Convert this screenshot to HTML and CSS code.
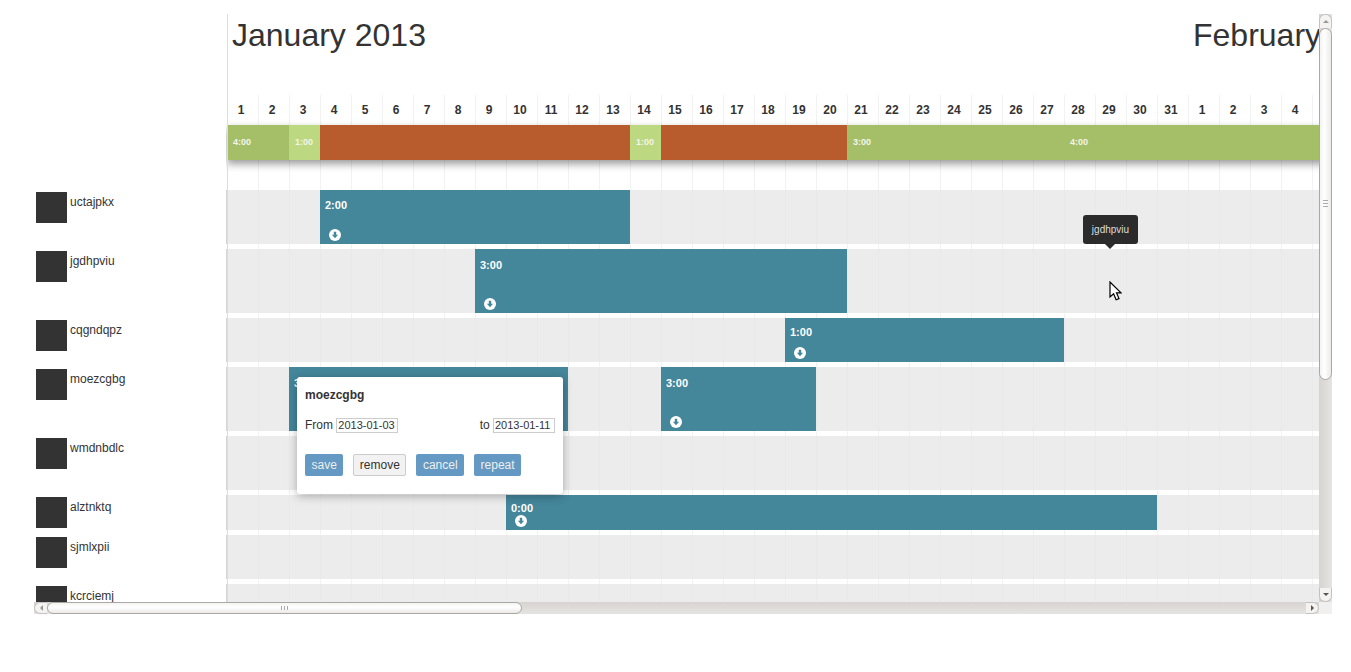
FILE: index.html
```html
<!DOCTYPE html>
<html>
<head>
  <title>Gantt</title>
  <meta name="viewport" content="width=device-width, initial-scale=1">
  <link rel="stylesheet" href="styles.css">
</head>
<body>

  <div class="app">
    <div class="view">
      <div class="names">
        <div class="name h54"><span class="avatar"></span>uctajpkx</div>
        <div class="name h64"><span class="avatar"></span>jgdhpviu</div>
        <div class="name h44"><span class="avatar"></span>cqgndqpz</div>
        <div class="name h64"><span class="avatar"></span>moezcgbg</div>
        <div class="name h54"><span class="avatar"></span>wmdnbdlc</div>
        <div class="name h35"><span class="avatar"></span>alztnktq</div>
        <div class="name h44"><span class="avatar"></span>sjmlxpii</div>
        <div class="name h54"><span class="avatar"></span>kcrciemj</div>
      </div>

      <div class="timeline">
        <div class="months">
          <div class="month">January 2013</div>
          <div class="month">February 2013</div>
        </div>

        <div class="grid">
          <div class="days">
            <span>1</span><span>2</span><span>3</span><span>4</span><span>5</span><span>6</span><span>7</span><span>8</span><span>9</span><span>10</span>
            <span>11</span><span>12</span><span>13</span><span>14</span><span>15</span><span>16</span><span>17</span><span>18</span><span>19</span><span>20</span>
            <span>21</span><span>22</span><span>23</span><span>24</span><span>25</span><span>26</span><span>27</span><span>28</span><span>29</span><span>30</span><span>31</span>
            <span>1</span><span>2</span><span>3</span><span>4</span>
          </div>

          <div class="summary">
            <div class="seg ok" style="grid-column: 1 / 3">4:00</div>
            <div class="seg light" style="grid-column: 3 / 4">1:00</div>
            <div class="seg over" style="grid-column: 4 / 14"></div>
            <div class="seg light" style="grid-column: 14 / 15">1:00</div>
            <div class="seg over" style="grid-column: 15 / 21"></div>
            <div class="seg ok" style="grid-column: 21 / 28">3:00</div>
            <div class="seg ok" style="grid-column: 28 / 37">4:00</div>
          </div>

          <div class="rows">
            <div class="row h54">
              <div class="bar" style="grid-column: 4 / 14">
                <b>2:00</b>
                <svg class="dl" viewBox="0 0 12 12"><circle cx="6" cy="6" r="6" fill="#fff"/><path d="M4.8 2.8h2.4v3h1.9L6 9.2 2.9 5.8h1.9z" fill="#44869a"/></svg>
              </div>
            </div>
            <div class="row h64">
              <div class="bar" style="grid-column: 9 / 21">
                <b>3:00</b>
                <svg class="dl" viewBox="0 0 12 12"><circle cx="6" cy="6" r="6" fill="#fff"/><path d="M4.8 2.8h2.4v3h1.9L6 9.2 2.9 5.8h1.9z" fill="#44869a"/></svg>
              </div>
            </div>
            <div class="row h44">
              <div class="bar" style="grid-column: 19 / 28">
                <b>1:00</b>
                <svg class="dl" viewBox="0 0 12 12"><circle cx="6" cy="6" r="6" fill="#fff"/><path d="M4.8 2.8h2.4v3h1.9L6 9.2 2.9 5.8h1.9z" fill="#44869a"/></svg>
              </div>
            </div>
            <div class="row h64">
              <div class="bar" style="grid-column: 3 / 12">
                <b>3:00</b>
              </div>
              <div class="bar" style="grid-column: 15 / 20">
                <b>3:00</b>
                <svg class="dl" viewBox="0 0 12 12"><circle cx="6" cy="6" r="6" fill="#fff"/><path d="M4.8 2.8h2.4v3h1.9L6 9.2 2.9 5.8h1.9z" fill="#44869a"/></svg>
              </div>
            </div>
            <div class="row h54"></div>
            <div class="row h35">
              <div class="bar" style="grid-column: 10 / 31">
                <b>0:00</b>
                <svg class="dl" viewBox="0 0 12 12"><circle cx="6" cy="6" r="6" fill="#fff"/><path d="M4.8 2.8h2.4v3h1.9L6 9.2 2.9 5.8h1.9z" fill="#44869a"/></svg>
              </div>
            </div>
            <div class="row h44"></div>
            <div class="row h54"></div>
          </div>
        </div>
      </div>

      <div class="popover">
        <div class="pop-title">moezcgbg</div>
        <div class="pop-dates">
          <label>From <input type="text" value="2013-01-03"></label>
          <label>to <input type="text" value="2013-01-11"></label>
        </div>
        <div class="pop-buttons">
          <button class="btn save">save</button>
          <button class="btn plain">remove</button>
          <button class="btn">cancel</button>
          <button class="btn">repeat</button>
        </div>
      </div>

      <div class="tooltip">jgdhpviu</div>

      <svg class="cursor" viewBox="0 0 13 20"><path d="M1 1v15l3.6-3.2 2.5 6 2.9-1.2-2.5-5.8H12z" fill="#fff" stroke="#000" stroke-width="1.2"/></svg>
    </div>

    <div class="vbar">
      <div class="arrow-btn top"><i class="tri up"></i></div>
      <div class="vthumb"><span class="grip-v"></span></div>
      <div class="vfill"></div>
      <div class="arrow-btn bottom"><i class="tri down"></i></div>
    </div>

    <div class="hbar">
      <div class="arrow-btn left"><i class="tri back"></i></div>
      <div class="hthumb"><span class="grip-h"></span></div>
      <div class="hfill"></div>
      <div class="arrow-btn right"><i class="tri next"></i></div>
    </div>
    <div class="corner"></div>
  </div>

</body>
</html>
```

FILE: styles.css
```css
body {
  margin: 0;
  background: #fff;
  color: #333;
  font-family: "Liberation Sans", Arial, sans-serif;
  font-size: 12px;
}

.app {
  display: grid;
  grid-template-columns: 1285px 13px;
  grid-template-rows: 588px 12px;
  width: 1298px;
  margin: 14px 0 0 34px;
}

.view {
  position: relative;
  display: flex;
  overflow: hidden;
}

/* names column */
.names {
  flex: none;
  width: 193px;
  padding-top: 176px;
  box-sizing: border-box;
}
.name {
  display: flex;
  box-sizing: border-box;
  margin-bottom: 5px;
  padding: 2px 0 0 2px;
  line-height: 21px;
  white-space: nowrap;
}
.avatar {
  flex: none;
  width: 31px;
  height: 31px;
  margin-right: 3px;
  background: #333;
}

.h35 { height: 35px; }
.h44 { height: 44px; }
.h54 { height: 54px; }
.h64 { height: 64px; }

/* timeline */
.timeline {
  position: relative;
  flex: none;
  width: 1116px;
  clip-path: inset(0 0 0 -1px);
}
.timeline::after {
  content: "";
  position: absolute;
  left: 0;
  top: 0;
  bottom: 0;
  width: 1px;
  background: #ddd;
}
.months {
  display: flex;
  height: 81px;
}
.month {
  flex: none;
  width: 961px;
  padding: 2px 0 0 5px;
  box-sizing: border-box;
  font-size: 32px;
  line-height: 38px;
  white-space: nowrap;
}
.grid {
  background-image: linear-gradient(to right, #f2f2f2 1px, transparent 1px);
  background-size: 31px 100%;
}
.days {
  display: grid;
  grid-template-columns: repeat(36, 31px);
  height: 30px;
}
.days span {
  padding: 8px 3px 0 0;
  text-align: center;
  font-weight: bold;
  line-height: 14px;
}
.summary {
  display: grid;
  grid-template-columns: repeat(36, 31px);
  height: 35px;
  box-shadow: 0 4px 8px rgba(0, 0, 0, .4);
  margin-bottom: 30px;
}
.seg {
  padding-left: 6px;
  color: #f4f4e8;
  font-size: 9px;
  font-weight: bold;
  line-height: 35px;
}
.ok { background: #a5bf69; }
.light { background: #bcd881; }
.over { background: #b85c2e; }

.row {
  display: grid;
  grid-template-columns: repeat(36, 31px);
  margin-bottom: 5px;
  background-color: #ececec;
  background-image: linear-gradient(to right, #e9e9e9 1px, transparent 1px);
  background-size: 31px 100%;
  box-shadow: -1px 0 0 #d4d4d4;
}
.row .bar {
  grid-row: 1;
}
.bar {
  display: flex;
  flex-direction: column;
  justify-content: space-between;
  align-items: flex-start;
  box-sizing: border-box;
  padding: 8px 0 3px 5px;
  background: #44869a;
  color: #fff;
  font-size: 11px;
  line-height: 14px;
}
.h64 .bar { padding-top: 9px; }
.h44 .bar { padding-top: 7px; }
.h35 .bar { padding-top: 6px; }
.dl {
  flex: none;
  width: 12px;
  height: 12px;
  margin-left: 4px;
}

/* popover */
.popover {
  position: absolute;
  left: 263px;
  top: 363px;
  width: 266px;
  height: 117px;
  box-sizing: border-box;
  padding: 11px 8px 0;
  background: #fff;
  border-radius: 3px;
  box-shadow: 0 2px 10px rgba(0, 0, 0, .3);
}
.pop-title {
  font-weight: bold;
  line-height: 14px;
}
.pop-dates {
  display: flex;
  justify-content: space-between;
  margin-top: 15px;
  line-height: 16px;
}
.pop-dates input {
  width: 62px;
  height: 15px;
  box-sizing: border-box;
  padding: 0 1px;
  border: 1px solid #ccc;
  font: 11px "Liberation Sans", Arial, sans-serif;
  color: #333;
}
.pop-buttons {
  display: flex;
  gap: 10px;
  margin-top: 21px;
}
.btn {
  height: 22px;
  padding: 0 6.5px;
  background: #6399c2;
  border: 0;
  border-radius: 2px;
  color: #eee;
  font: 12px "Liberation Sans", Arial, sans-serif;
}
.btn.plain {
  padding: 0 5.5px;
  background: #f2f2f2;
  border: 1px solid #ccc;
  color: #333;
}

/* tooltip and pointer */
.tooltip {
  position: absolute;
  left: 1049px;
  top: 201px;
  width: 55px;
  height: 29px;
  background: #2b2b2b;
  border-radius: 3px;
  color: #ddd;
  font-size: 10px;
  line-height: 29px;
  text-align: center;
}
.tooltip::after {
  content: "";
  position: absolute;
  left: 22px;
  top: 29px;
  border: 5px solid transparent;
  border-top-color: #2b2b2b;
  border-bottom: 0;
}
.cursor {
  position: absolute;
  left: 1075px;
  top: 267px;
  width: 13px;
  height: 20px;
}

/* scrollbars */
.vbar {
  display: flex;
  flex-direction: column;
  background: linear-gradient(to right, #d6d3d0, #e6e4e2);
}
.hbar {
  display: flex;
  background: linear-gradient(to bottom, #d6d3d0, #e6e4e2);
}
.corner {
  background: #f0f0f0;
}
.vfill, .hfill {
  flex: 1;
}
.arrow-btn {
  flex: none;
  display: flex;
  align-items: center;
  justify-content: center;
  box-sizing: border-box;
  background: #f4f3f1;
  border: 1px solid #c4c2c0;
}
.arrow-btn.top, .arrow-btn.bottom { height: 14px; }
.arrow-btn.left, .arrow-btn.right { width: 13px; }
.arrow-btn.top { border-radius: 6px 6px 0 0; border-bottom: 0; }
.arrow-btn.bottom { border-radius: 0 0 6px 6px; border-top: 0; }
.arrow-btn.left { border-radius: 6px 0 0 6px; border-right: 0; }
.arrow-btn.right { border-radius: 0 6px 6px 0; border-left: 0; }
.tri {
  width: 0;
  height: 0;
  border: 3px solid transparent;
}
.tri.up { border-bottom-color: #999; border-top: 0; }
.tri.down { border-top-color: #555; border-bottom: 0; }
.tri.back { border-right-color: #999; border-left: 0; }
.tri.next { border-left-color: #555; border-right: 0; }
.vthumb, .hthumb {
  flex: none;
  display: flex;
  align-items: center;
  justify-content: center;
  box-sizing: border-box;
  border: 1px solid #aaa8a6;
  border-radius: 7px;
}
.vthumb {
  height: 352px;
  background: linear-gradient(to right, #f4f3f2, #fff 40%, #eceae8);
}
.hthumb {
  width: 475px;
  background: linear-gradient(to bottom, #f4f3f2, #fff 40%, #eceae8);
}
.grip-v {
  width: 5px;
  height: 7px;
  margin-bottom: 2px;
  background: repeating-linear-gradient(to bottom, #aaa 0 1px, transparent 1px 3px);
}
.grip-h {
  width: 7px;
  height: 4px;
  margin-right: 1px;
  background: repeating-linear-gradient(to right, #aaa 0 1px, transparent 1px 3px);
}
```
